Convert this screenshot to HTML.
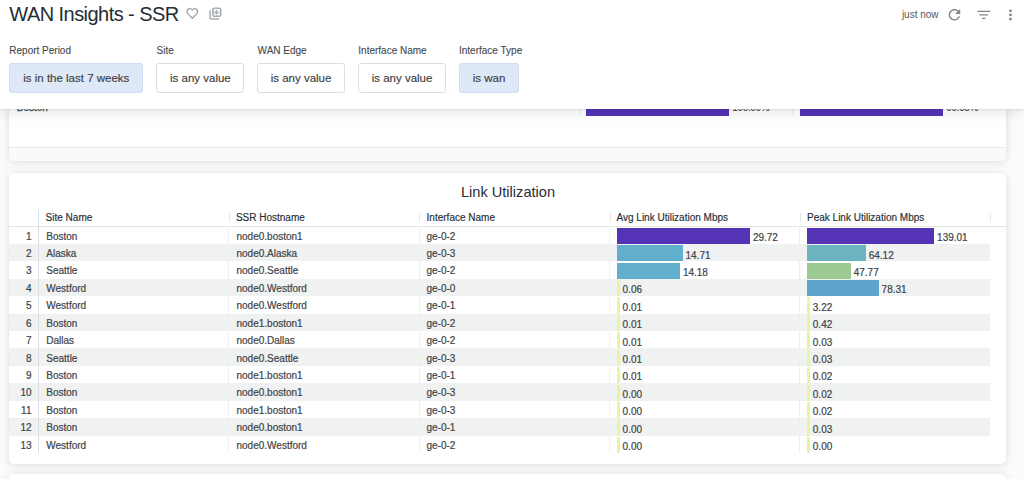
<!DOCTYPE html>
<html><head><meta charset="utf-8">
<style>
html,body{margin:0;padding:0;}
body{width:1024px;height:479px;overflow:hidden;position:relative;background:#fbfbfb;font-family:"Liberation Sans",sans-serif;color:#3a3f44;}
.card{position:absolute;left:9px;width:997px;background:#fff;border-radius:5px;box-shadow:0 1px 8px rgba(0,0,0,0.13);overflow:hidden;}
.abs{position:absolute;white-space:nowrap;}
#hdr{position:absolute;left:0;top:0;width:1024px;height:109px;background:#fff;box-shadow:0 1px 2px rgba(0,0,0,0.06),0 4px 12px rgba(0,0,0,0.09);z-index:10;}
.title{position:absolute;left:9.3px;top:4px;font-size:20px;line-height:20px;letter-spacing:-0.55px;color:#262d33;white-space:nowrap;}
.lbl{position:absolute;top:46.4px;font-size:10px;line-height:10px;color:#44484d;-webkit-text-stroke:0.1px #44484d;white-space:nowrap;}
.fbox{position:absolute;top:63px;height:28px;border:1px solid #dcdee2;border-radius:3px;background:#fff;font-size:11.5px;line-height:28px;text-align:center;color:#3c4043;-webkit-text-stroke:0.15px #3c4043;white-space:nowrap;}
.fbox.sel{background:#dfe8f7;border-color:#cfdcf0;}
.stripe{position:absolute;left:9px;width:981px;height:17.42px;background:#f0f1f1;}
.t{position:absolute;height:17.42px;font-size:10px;line-height:17.42px;padding-top:1.1px;box-sizing:border-box;white-space:nowrap;color:#3f4347;-webkit-text-stroke:0.2px #3f4347;}
.t.num{left:9px;width:22.5px;text-align:right;}
.t.v{padding-top:1.3px;}
.bar{position:absolute;height:16.1px;}
.vdiv{position:absolute;top:226.5px;width:1px;height:226.46px;background:#eef0f1;}
.hdiv{position:absolute;top:212.7px;width:1px;height:9.6px;background:#e4e6e8;}
.th{position:absolute;top:213.0px;font-size:10px;line-height:10px;color:#262d33;white-space:nowrap;-webkit-text-stroke:0.15px #262d33;}
</style></head><body>

<!-- card 1 (partially hidden) -->
<div class="card" style="top:-60px;height:221.2px;">
  <div style="position:absolute;left:0;top:206.6px;width:998px;height:14.6px;background:#fafafa;border-top:1px solid #ebebeb;"></div>
</div>
<div class="abs" style="left:16.8px;top:103.3px;font-size:10px;line-height:10px;color:#3a3f44;-webkit-text-stroke:0.25px #3a3f44;z-index:2">Boston</div>
<div class="abs" style="left:578.5px;top:95px;width:1px;height:20px;background:#eceeef;z-index:2"></div>
<div class="abs" style="left:791.7px;top:95px;width:1px;height:20px;background:#eceeef;z-index:2"></div>
<div class="abs" style="left:586px;top:100.3px;width:143px;height:16.1px;background:#5433b7;z-index:2"></div>
<div class="abs" style="left:800px;top:100.3px;width:142.6px;height:16.1px;background:#5433b7;z-index:2"></div>
<div class="abs" style="left:732.3px;top:103.4px;font-size:10px;line-height:10px;letter-spacing:-0.35px;color:#3a3f44;z-index:2">100.00%</div>
<div class="abs" style="left:946.3px;top:103.4px;font-size:10px;line-height:10px;letter-spacing:-0.35px;color:#3a3f44;z-index:2">99.98%</div>

<!-- card 2 -->
<div class="card" style="top:172.5px;height:291.2px;"></div>
<div class="abs" style="left:0;width:1016px;top:184.5px;text-align:center;font-size:14.6px;line-height:14.6px;color:#262d33;">Link Utilization</div>
<div class="abs" style="left:9px;top:226px;width:998px;height:1px;background:#e2e4e6"></div>

<div class="hdiv" style="left:228.5px"></div>
<div class="hdiv" style="left:419px"></div>
<div class="hdiv" style="left:609.5px"></div>
<div class="hdiv" style="left:799.8px"></div>
<div class="hdiv" style="left:990px"></div>
<div class="th" style="left:45.6px">Site Name</div>
<div class="th" style="left:235.9px">SSR Hostname</div>
<div class="th" style="left:426.6px">Interface Name</div>
<div class="th" style="left:616.5px">Avg Link Utilization Mbps</div>
<div class="th" style="left:807px">Peak Link Utilization Mbps</div>
<div class="t num" style="top:226.50px">1</div>
<div class="t" style="top:226.50px;left:46.3px">Boston</div>
<div class="t" style="top:226.50px;left:236.5px">node0.boston1</div>
<div class="t" style="top:226.50px;left:426.5px">ge-0-2</div>
<div class="bar" style="top:227.80px;left:617px;width:133px;background:#5433b7"></div>
<div class="t v" style="top:227.80px;left:752.90px">29.72</div>
<div class="bar" style="top:227.80px;left:807.2px;width:127px;background:#5433b7"></div>
<div class="t v" style="top:227.80px;left:937.10px">139.01</div><div class="stripe" style="top:243.92px"></div>
<div class="t num" style="top:243.92px">2</div>
<div class="t" style="top:243.92px;left:46.3px">Alaska</div>
<div class="t" style="top:243.92px;left:236.5px">node0.Alaska</div>
<div class="t" style="top:243.92px;left:426.5px">ge-0-3</div>
<div class="bar" style="top:245.22px;left:617px;width:65.6px;background:#62aecd"></div>
<div class="t v" style="top:245.22px;left:685.50px">14.71</div>
<div class="bar" style="top:245.22px;left:807.2px;width:58.6px;background:#6cb3c0"></div>
<div class="t v" style="top:245.22px;left:868.70px">64.12</div><div class="t num" style="top:261.34px">3</div>
<div class="t" style="top:261.34px;left:46.3px">Seattle</div>
<div class="t" style="top:261.34px;left:236.5px">node0.Seattle</div>
<div class="t" style="top:261.34px;left:426.5px">ge-0-2</div>
<div class="bar" style="top:262.64px;left:617px;width:63px;background:#62aecd"></div>
<div class="t v" style="top:262.64px;left:682.90px">14.18</div>
<div class="bar" style="top:262.64px;left:807.2px;width:43.6px;background:#9cca93"></div>
<div class="t v" style="top:262.64px;left:853.70px">47.77</div><div class="stripe" style="top:278.76px"></div>
<div class="t num" style="top:278.76px">4</div>
<div class="t" style="top:278.76px;left:46.3px">Westford</div>
<div class="t" style="top:278.76px;left:236.5px">node0.Westford</div>
<div class="t" style="top:278.76px;left:426.5px">ge-0-0</div>
<div class="bar" style="top:280.06px;left:617px;width:2.7px;background:#e4f5a3"></div>
<div class="t v" style="top:280.06px;left:622.60px">0.06</div>
<div class="bar" style="top:280.06px;left:807.2px;width:71.5px;background:#5fa4cd"></div>
<div class="t v" style="top:280.06px;left:881.60px">78.31</div><div class="t num" style="top:296.18px">5</div>
<div class="t" style="top:296.18px;left:46.3px">Westford</div>
<div class="t" style="top:296.18px;left:236.5px">node0.Westford</div>
<div class="t" style="top:296.18px;left:426.5px">ge-0-1</div>
<div class="bar" style="top:297.48px;left:617px;width:2.7px;background:#e4f5a3"></div>
<div class="t v" style="top:297.48px;left:622.60px">0.01</div>
<div class="bar" style="top:297.48px;left:807.2px;width:2.7px;background:#e4f5a3"></div>
<div class="t v" style="top:297.48px;left:812.80px">3.22</div><div class="stripe" style="top:313.60px"></div>
<div class="t num" style="top:313.60px">6</div>
<div class="t" style="top:313.60px;left:46.3px">Boston</div>
<div class="t" style="top:313.60px;left:236.5px">node1.boston1</div>
<div class="t" style="top:313.60px;left:426.5px">ge-0-2</div>
<div class="bar" style="top:314.90px;left:617px;width:2.7px;background:#e4f5a3"></div>
<div class="t v" style="top:314.90px;left:622.60px">0.01</div>
<div class="bar" style="top:314.90px;left:807.2px;width:2.7px;background:#e4f5a3"></div>
<div class="t v" style="top:314.90px;left:812.80px">0.42</div><div class="t num" style="top:331.02px">7</div>
<div class="t" style="top:331.02px;left:46.3px">Dallas</div>
<div class="t" style="top:331.02px;left:236.5px">node0.Dallas</div>
<div class="t" style="top:331.02px;left:426.5px">ge-0-2</div>
<div class="bar" style="top:332.32px;left:617px;width:2.7px;background:#e4f5a3"></div>
<div class="t v" style="top:332.32px;left:622.60px">0.01</div>
<div class="bar" style="top:332.32px;left:807.2px;width:2.7px;background:#e4f5a3"></div>
<div class="t v" style="top:332.32px;left:812.80px">0.03</div><div class="stripe" style="top:348.44px"></div>
<div class="t num" style="top:348.44px">8</div>
<div class="t" style="top:348.44px;left:46.3px">Seattle</div>
<div class="t" style="top:348.44px;left:236.5px">node0.Seattle</div>
<div class="t" style="top:348.44px;left:426.5px">ge-0-3</div>
<div class="bar" style="top:349.74px;left:617px;width:2.7px;background:#e4f5a3"></div>
<div class="t v" style="top:349.74px;left:622.60px">0.01</div>
<div class="bar" style="top:349.74px;left:807.2px;width:2.7px;background:#e4f5a3"></div>
<div class="t v" style="top:349.74px;left:812.80px">0.03</div><div class="t num" style="top:365.86px">9</div>
<div class="t" style="top:365.86px;left:46.3px">Boston</div>
<div class="t" style="top:365.86px;left:236.5px">node1.boston1</div>
<div class="t" style="top:365.86px;left:426.5px">ge-0-1</div>
<div class="bar" style="top:367.16px;left:617px;width:2.7px;background:#e4f5a3"></div>
<div class="t v" style="top:367.16px;left:622.60px">0.01</div>
<div class="bar" style="top:367.16px;left:807.2px;width:2.7px;background:#e4f5a3"></div>
<div class="t v" style="top:367.16px;left:812.80px">0.02</div><div class="stripe" style="top:383.28px"></div>
<div class="t num" style="top:383.28px">10</div>
<div class="t" style="top:383.28px;left:46.3px">Boston</div>
<div class="t" style="top:383.28px;left:236.5px">node0.boston1</div>
<div class="t" style="top:383.28px;left:426.5px">ge-0-3</div>
<div class="bar" style="top:384.58px;left:617px;width:2.7px;background:#e4f5a3"></div>
<div class="t v" style="top:384.58px;left:622.60px">0.00</div>
<div class="bar" style="top:384.58px;left:807.2px;width:2.7px;background:#e4f5a3"></div>
<div class="t v" style="top:384.58px;left:812.80px">0.02</div><div class="t num" style="top:400.70px">11</div>
<div class="t" style="top:400.70px;left:46.3px">Boston</div>
<div class="t" style="top:400.70px;left:236.5px">node1.boston1</div>
<div class="t" style="top:400.70px;left:426.5px">ge-0-3</div>
<div class="bar" style="top:402.00px;left:617px;width:2.7px;background:#e4f5a3"></div>
<div class="t v" style="top:402.00px;left:622.60px">0.00</div>
<div class="bar" style="top:402.00px;left:807.2px;width:2.7px;background:#e4f5a3"></div>
<div class="t v" style="top:402.00px;left:812.80px">0.02</div><div class="stripe" style="top:418.12px"></div>
<div class="t num" style="top:418.12px">12</div>
<div class="t" style="top:418.12px;left:46.3px">Boston</div>
<div class="t" style="top:418.12px;left:236.5px">node0.boston1</div>
<div class="t" style="top:418.12px;left:426.5px">ge-0-1</div>
<div class="bar" style="top:419.42px;left:617px;width:2.7px;background:#e4f5a3"></div>
<div class="t v" style="top:419.42px;left:622.60px">0.00</div>
<div class="bar" style="top:419.42px;left:807.2px;width:2.7px;background:#e4f5a3"></div>
<div class="t v" style="top:419.42px;left:812.80px">0.03</div><div class="t num" style="top:435.54px">13</div>
<div class="t" style="top:435.54px;left:46.3px">Westford</div>
<div class="t" style="top:435.54px;left:236.5px">node0.Westford</div>
<div class="t" style="top:435.54px;left:426.5px">ge-0-2</div>
<div class="bar" style="top:436.84px;left:617px;width:2.7px;background:#e4f5a3"></div>
<div class="t v" style="top:436.84px;left:622.60px">0.00</div>
<div class="bar" style="top:436.84px;left:807.2px;width:2.7px;background:#e4f5a3"></div>
<div class="t v" style="top:436.84px;left:812.80px">0.00</div>
<div class="vdiv" style="left:228.30px"></div><div class="vdiv" style="left:419.10px"></div><div class="vdiv" style="left:609.30px"></div><div class="vdiv" style="left:799.10px"></div>
<div class="abs" style="left:38px;top:209px;width:1px;height:244px;background:#dadde2"></div>

<!-- card 3 -->
<div class="card" style="top:474px;height:40px;"></div>

<!-- header -->
<div id="hdr">
  <div class="title">WAN Insights - SSR</div>
  <svg style="position:absolute;left:182px;top:4px" width="44" height="20" viewBox="0 0 44 20"><path d="M10.3 14.3 L5.9 9.9 C4.7 8.7 4.7 6.5 5.9 5.3 C7.1 4.2 9.0 4.3 10.0 5.6 L10.3 6.0 L10.6 5.6 C11.6 4.3 13.5 4.2 14.7 5.3 C15.9 6.5 15.9 8.7 14.7 9.9 Z" fill="none" stroke="#9aa0a6" stroke-width="1.3" stroke-linejoin="round"/><path d="M28 6.2 V14 Q28 15 29 15 H37" fill="none" stroke="#a9aeb3" stroke-width="1.5"/><rect x="30.95" y="4.25" width="7.7" height="8.0" rx="1.3" fill="none" stroke="#a9aeb3" stroke-width="1.7"/><path d="M34.5 6.1 V10.7 M32.2 8.4 H36.8" stroke="#a9aeb3" stroke-width="1.5"/></svg>

  <div class="lbl" style="left:9.3px">Report Period</div>
  <div class="lbl" style="left:156.5px">Site</div>
  <div class="lbl" style="left:257.6px">WAN Edge</div>
  <div class="lbl" style="left:358.3px">Interface Name</div>
  <div class="lbl" style="left:459px">Interface Type</div>

  <div class="fbox sel" style="left:9.3px;width:132px">is in the last 7 weeks</div>
  <div class="fbox" style="left:156.4px;width:86px">is any value</div>
  <div class="fbox" style="left:257.3px;width:85.5px">is any value</div>
  <div class="fbox" style="left:358.3px;width:85.5px">is any value</div>
  <div class="fbox sel" style="left:459px;width:58px">is wan</div>

  <div class="abs" style="left:901.9px;top:9.9px;font-size:10px;line-height:10px;color:#55595e">just now</div>
  <svg style="position:absolute;left:940px;top:0px" width="24" height="26" viewBox="0 0 24 26"><g transform="translate(5.8 6.2) scale(0.72)"><path d="M17.65 6.35C16.2 4.9 14.21 4 12 4c-4.42 0-7.99 3.58-7.99 8s3.57 8 7.99 8c3.73 0 6.84-2.55 7.73-6h-2.08c-.82 2.330-3.04 4-5.65 4-3.31 0-6-2.69-6-6s2.69-6 6-6c1.66 0 3.14.69 4.22 1.78L13 11h7V4l-2.35 2.35z" fill="#80868b"/></g></svg>
  <svg style="position:absolute;left:977px;top:10px" width="14" height="10" viewBox="0 0 14 10"><path d="M0.4 1.4 H13.2 M2.5 4.8 H11.1 M5 8.3 H8.4" stroke="#80868b" stroke-width="1.3"/></svg>
  <svg style="position:absolute;left:1000px;top:0px" width="24" height="26" viewBox="0 0 24 26"><circle cx="10.5" cy="10.85" r="1.4" fill="#80868b"/><circle cx="10.5" cy="14.95" r="1.4" fill="#80868b"/><circle cx="10.5" cy="19.05" r="1.4" fill="#80868b"/></svg>
</div>
</body></html>
